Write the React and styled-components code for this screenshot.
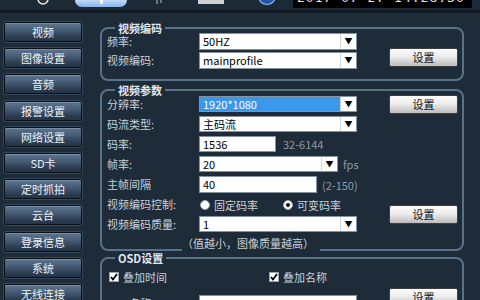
import React from "react";
import styled, { createGlobalStyle } from "styled-components";

const Global = createGlobalStyle`
  html, body { margin: 0; padding: 0; background: #1e2c3a; }
  body { width: 480px; height: 300px; overflow: hidden; font-family: "Noto Sans CJK SC", "Noto Sans", sans-serif; }
  * { box-sizing: border-box; }
`;

const Page = styled.div`
  width: 480px;
  height: 300px;
  overflow: hidden;
  background: #1e2c3a;
`;

const TopBar = styled.div`
  height: 13px;
  display: flex;
  align-items: flex-start;
  background: #1c2936;
  border-bottom: 3px solid #0f1821;
  overflow: hidden;
`;

const Ring = styled.svg`
  margin-left: 36px;
  flex: none;
`;

const Tab = styled.div`
  margin-left: 25px;
  width: 52px;
  height: 7px;
  border-radius: 0 0 7px 7px;
  background: linear-gradient(#c0daf7, #86b5ea);
  display: flex;
  justify-content: center;
  flex: none;
`;

const TabMark = styled.div`
  width: 3px;
  height: 4px;
  background: #fff;
  border-radius: 0 0 2px 2px;
`;

const Mark = styled.svg`
  margin-left: 25px;
  flex: none;
`;

const GrayRect = styled.div`
  margin-left: 32px;
  width: 26px;
  height: 4px;
  background: #cfd0d2;
  flex: none;
`;

const BlueDot = styled.svg`
  margin-left: 33px;
  flex: none;
`;

const Clock = styled.div`
  margin-left: 16px;
  width: 179px;
  height: 8px;
  background: #000;
  color: #e6e6e6;
  font-family: "DejaVu Sans Mono", monospace;
  font-size: 13px;
  line-height: 13px;
  overflow: hidden;
  padding-left: 4px;
  flex: none;
  span { display: block; margin-top: -9px; letter-spacing: 1px; }
`;

const Body = styled.div`
  display: flex;
  align-items: flex-start;
  padding-top: 9px;
`;

const Nav = styled.nav`
  margin-left: 4px;
  width: 78px;
  display: flex;
  flex-direction: column;
  gap: 6.2px;
  flex: none;
`;

const NavButton = styled.div`
  height: 20px;
  border: 1px solid #0a1118;
  border-radius: 2px;
  background: linear-gradient(#5f7690 0%, #465c75 40%, #2d3f53 75%, #243446 100%);
  box-shadow: inset 0 1px 0 rgba(255, 255, 255, 0.18), 0 0 0 1px #34475b;
  color: #eef2f5;
  font-size: 11px;
  line-height: 18px;
  text-align: center;
  white-space: nowrap;
`;

const Main = styled.div`
  margin-left: 18px;
  margin-top: 1px;
  width: 364px;
  display: flex;
  flex-direction: column;
  flex: none;
`;

const Field = styled.fieldset`
  margin: ${(p) => p.$mt || 0}px 0 0 0;
  min-width: 0;
  border: 2px solid #5a718a;
  border-radius: 8px;
  padding: ${(p) => p.$pt || 0}px 4px ${(p) => p.$pb || 0}px 5px;
  display: grid;
  grid-template-columns: 92px 158px 1fr 69px;
  grid-template-rows: ${(p) => p.$rows};
  row-gap: ${(p) => p.$gap}px;
`;

const Legend = styled.legend`
  margin-left: 8px;
  padding: 0 3px;
  font-size: 11px;
  font-weight: bold;
  line-height: 10px;
  color: #e2e7ec;
  white-space: nowrap;
`;

const Label = styled.div`
  grid-column: 1;
  font-size: 11px;
  line-height: ${(p) => p.$lh || 16}px;
  color: #c9d0d7;
  white-space: nowrap;
`;

const Cell = styled.div`
  grid-column: ${(p) => p.$span || "2"};
  display: flex;
  align-items: center;
  gap: ${(p) => p.$gap || 6}px;
  min-width: 0;
`;

const Select = styled.div`
  width: ${(p) => p.$w || 158}px;
  height: 100%;
  display: flex;
  border: 1px solid #8593a0;
  background: ${(p) => (p.$hl ? "#3b97ea" : "#fff")};
  color: ${(p) => (p.$hl ? "#fff" : "#000")};
  flex: none;
`;

const SelectText = styled.div`
  flex: 1;
  padding-left: 3px;
  font-size: 11px;
  line-height: 14px;
  white-space: nowrap;
  overflow: hidden;
`;

const Arrow = styled.div`
  width: 16px;
  background: #fff;
  border-left: 1px solid #d4d8dc;
  color: #000;
  font-size: 8px;
  line-height: 14px;
  text-align: center;
`;

const Input = styled.div`
  width: ${(p) => p.$w}px;
  height: 100%;
  border: 1px solid #8593a0;
  background: #fff;
  color: #000;
  font-size: 11px;
  line-height: 14px;
  padding-left: 3px;
  flex: none;
`;

const Hint = styled.span`
  font-size: 11px;
  color: #8e99a4;
  white-space: nowrap;
`;

const Setting = styled.div`
  grid-column: 4;
  grid-row: ${(p) => p.$row};
  align-self: ${(p) => p.$align || "center"};
  margin-bottom: ${(p) => p.$mb || 0}px;
  height: 19px;
  border: 1px solid #3c3f42;
  border-radius: 2px;
  background: linear-gradient(#fdfdfd 0%, #ececec 45%, #d2d2d2 75%, #bdbdbd 100%);
  color: #111;
  font-size: 11px;
  line-height: 17px;
  text-align: center;
`;

const Choice = styled.label`
  display: flex;
  align-items: center;
  gap: 4px;
  width: ${(p) => (p.$w ? `${p.$w}px` : "auto")};
  margin-left: ${(p) => p.$ml || 0}px;
  font-size: 11px;
  color: #c9d0d7;
  white-space: nowrap;
  flex: none;
`;

const Radio = styled.span`
  width: 10px;
  height: 10px;
  border-radius: 50%;
  background: #fff;
  border: 1px solid #9aa4ad;
  display: flex;
  align-items: center;
  justify-content: center;
  &::after {
    content: "";
    width: 4px;
    height: 4px;
    border-radius: 50%;
    background: ${(p) => (p.$on ? "#000" : "transparent")};
  }
`;

const Check = styled.span`
  width: 10px;
  height: 10px;
  background: #fff;
  border: 1px solid #9aa4ad;
  display: flex;
  align-items: center;
  justify-content: center;
`;

const Note = styled.div`
  grid-column: 1 / 4;
  justify-self: start;
  margin-left: 75px;
  margin-bottom: -5px;
  width: 138px;
  background: #1e2c3a;
  font-size: 11px;
  line-height: 14px;
  color: #c9d0d7;
  white-space: nowrap;
`;

const CheckRow = styled.div`
  grid-column: 1 / 4;
  display: flex;
  align-items: center;
  padding-left: 2px;
`;

const navItems = ["视频", "图像设置", "音频", "报警设置", "网络设置", "SD卡", "定时抓拍", "云台", "登录信息", "系统", "无线连接"];

const Sel = ({ value, w, hl }) => (
  <Select $w={w} $hl={hl}>
    <SelectText>{value}</SelectText>
    <Arrow>▼</Arrow>
  </Select>
);

const Tick = () => (
  <svg width="8" height="8" viewBox="0 0 8 8">
    <path d="M1 4 L3 6.5 L7 1" fill="none" stroke="#000" strokeWidth="1.8" />
  </svg>
);

export default function App() {
  return (
    <Page>
      <Global />
      <TopBar>
        <Ring width="14" height="6" viewBox="0 0 14 6">
          <circle cx="7" cy="-1" r="5" fill="#2a2f35" stroke="#e8e8e8" strokeWidth="1.5" />
        </Ring>
        <Tab>
          <TabMark />
        </Tab>
        <Mark width="14" height="5" viewBox="0 0 14 5">
          <rect x="4" y="0" width="2" height="4" fill="#6b7480" />
          <rect x="8" y="0" width="2" height="3" fill="#6b7480" />
        </Mark>
        <GrayRect />
        <BlueDot width="20" height="6" viewBox="0 0 20 6">
          <circle cx="10" cy="-4" r="8.5" fill="#2456a8" stroke="#8fb6e6" strokeWidth="1.2" />
        </BlueDot>
        <Clock>
          <span>2017-07-27 14:28:30</span>
        </Clock>
      </TopBar>
      <Body>
        <Nav>
          {navItems.map((n) => (
            <NavButton key={n}>{n}</NavButton>
          ))}
        </Nav>
        <Main>
          <Field $pt={0} $pb={10} $rows="17px 17px" $gap={2}>
            <Legend>视频编码</Legend>
            <Label>频率:</Label>
            <Cell>
              <Sel value="50HZ" />
            </Cell>
            <Label>视频编码:</Label>
            <Cell>
              <Sel value="mainprofile" />
            </Cell>
            <Setting $row="1 / 3" $align="end" $mb={2}>设置</Setting>
          </Field>

          <Field $mt={4} $pt={1} $pb={0} $rows="16px 16px 16px 16px 17px 15px 16px 13px" $gap={4}>
            <Legend>视频参数</Legend>
            <Label>分辨率:</Label>
            <Cell>
              <Sel value="1920*1080" hl />
            </Cell>
            <Setting $row="1">设置</Setting>
            <Label>码流类型:</Label>
            <Cell>
              <Sel value="主码流" />
            </Cell>
            <Label>码率:</Label>
            <Cell $span="2 / 4" $gap={7}>
              <Input $w={77}>1536</Input>
              <Hint>32-6144</Hint>
            </Cell>
            <Label>帧率:</Label>
            <Cell $span="2 / 4" $gap={5}>
              <Sel value="20" w={139} />
              <Hint>fps</Hint>
            </Cell>
            <Label>主帧间隔</Label>
            <Cell $span="2 / 4" $gap={5}>
              <Input $w={118}>40</Input>
              <Hint>(2-150)</Hint>
            </Cell>
            <Label $lh={15}>视频编码控制:</Label>
            <Cell $span="2 / 4" $gap={0}>
              <Choice $w={77} $ml={1}>
                <Radio />
                固定码率
              </Choice>
              <Choice>
                <Radio $on />
                可变码率
              </Choice>
            </Cell>
            <Label>视频编码质量:</Label>
            <Cell>
              <Sel value="1" />
            </Cell>
            <Setting $row="6 / 8">设置</Setting>
            <Note>（值越小，图像质量越高）</Note>
          </Field>

          <Field $mt={2} $pt={6} $pb={4} $rows="16px 16px" $gap={10}>
            <Legend>OSD设置</Legend>
            <CheckRow>
              <Choice $w={160}>
                <Check>
                  <Tick />
                </Check>
                叠加时间
              </Choice>
              <Choice>
                <Check>
                  <Tick />
                </Check>
                叠加名称
              </Choice>
            </CheckRow>
            <Label>OSD名称:</Label>
            <Cell>
              <Input $w={158}>IP Camera</Input>
            </Cell>
            <Setting $row="1 / 3" $align="end" $mb={4}>设置</Setting>
          </Field>
        </Main>
      </Body>
    </Page>
  );
}
